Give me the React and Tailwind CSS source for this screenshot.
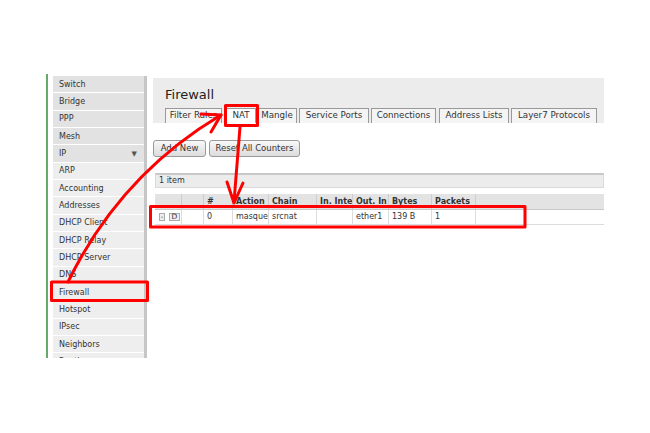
import React from 'react';

const menu = [
  { label: 'Switch', top: true },
  { label: 'Bridge', top: true },
  { label: 'PPP', top: true },
  { label: 'Mesh', top: true },
  { label: 'IP', top: true, open: true },
  { label: 'ARP' },
  { label: 'Accounting' },
  { label: 'Addresses' },
  { label: 'DHCP Client' },
  { label: 'DHCP Relay' },
  { label: 'DHCP Server' },
  { label: 'DNS' },
  { label: 'Firewall' },
  { label: 'Hotspot' },
  { label: 'IPsec' },
  { label: 'Neighbors' },
  { label: 'Routing' },
];

const tabs = [
  { label: 'Filter Rules', cls: 'w-[57px]' },
  { label: 'NAT', cls: 'ml-[4px] w-[30px]', active: true },
  { label: 'Mangle', cls: 'ml-[1px] w-[40px]' },
  { label: 'Service Ports', cls: 'ml-[2px] w-[70px]' },
  { label: 'Connections', cls: 'ml-[2px] w-[65px]' },
  { label: 'Address Lists', cls: 'ml-[3px] w-[70px]' },
  { label: 'Layer7 Protocols', cls: 'ml-[2px] w-[86px]' },
];

const columns = [
  { head: '', cls: 'w-[27px]' },
  { head: '', cls: 'w-[22px]' },
  { head: '#', cls: 'w-[29px]' },
  { head: 'Action', cls: 'w-[36px]' },
  { head: 'Chain', cls: 'w-[48px]' },
  { head: 'In. Inte', cls: 'w-[36px]' },
  { head: 'Out. In', cls: 'w-[36px]' },
  { head: 'Bytes', cls: 'w-[43px]' },
  { head: 'Packets', cls: 'w-[44px]' },
];

const row = ['', '', '0', 'masquerade', 'srcnat', '', 'ether1', '139 B', '1'];

function Sidebar() {
  return (
    <div className="flex h-[284px] border-l-2 border-[#67a967] pl-[5px] pt-[2px]">
      <div className="w-[91px] overflow-hidden">
        {menu.map((item) => (
          <div
            key={item.label}
            className={`flex h-[17.33px] items-center justify-between border-b border-white pl-[6px] pr-[7px] pt-[1px] text-[8px] text-[#333] ${
              item.top ? 'bg-[#e2e2e2]' : 'bg-[#eeeeee]'
            }`}
          >
            <span>{item.label}</span>
            {item.open && <span className="text-[7px] text-[#555]">▼</span>}
          </div>
        ))}
      </div>
      <div className="w-[3px] bg-[#c6c6c6]" />
    </div>
  );
}

function Firewall() {
  return (
    <main className="ml-[6px] w-[451px] pt-[4px]">
      <div className="h-[45px] bg-[#ececec] pl-[12px] pt-[9px]">
        <h1 className="text-[13px] leading-[16px] text-[#222]">Firewall</h1>
        <div className="mt-[5px] flex items-end">
          {tabs.map((tab) => (
            <div
              key={tab.label}
              className={`flex h-[15px] items-center justify-center whitespace-nowrap border border-b-0 border-[#999] text-[8.7px] text-[#333] ${tab.cls} ${
                tab.active ? 'bg-white' : 'bg-[#f4f4f4]'
              }`}
            >
              {tab.label}
            </div>
          ))}
        </div>
      </div>

      <div className="mt-[17px] flex gap-[3px]">
        <button className="h-[17px] w-[53px] rounded-[3px] border border-[#9a9a9a] bg-gradient-to-b from-[#f8f8f8] to-[#dcdcdc] text-[8.5px] text-[#333]">
          Add New
        </button>
        <button className="h-[17px] w-[91px] rounded-[3px] border border-[#9a9a9a] bg-gradient-to-b from-[#f8f8f8] to-[#dcdcdc] text-[8.5px] text-[#333]">
          Reset All Counters
        </button>
      </div>

      <div className="ml-[2px] mt-[16px] flex h-[15px] items-center border border-t-2 border-[#dadada] border-t-[#c8c8c8] bg-[#ececec] pl-[3px] text-[8px] text-[#333]">
        1 item
      </div>

      <div className="ml-[2px] mt-[6px]">
        <div className="flex h-[16px] border-b border-[#c8c8c8] bg-[#e3e3e3]">
          {columns.map((col, i) => (
            <div key={i} className={`flex items-center overflow-hidden whitespace-nowrap border-r border-[#cdcdcd] pl-[3px] text-[8px] font-bold text-[#333] ${col.cls}`}>
              {col.head}
            </div>
          ))}
          <div className="flex-1" />
        </div>
        <div className="flex h-[15px] border-b border-[#dcdcdc] bg-white">
          {columns.map((col, i) => (
            <div key={i} className={`flex items-center overflow-hidden whitespace-nowrap border-r border-[#dcdcdc] pl-[3px] text-[8px] text-[#333] ${col.cls}`}>
              {i === 0 ? (
                <div className="flex gap-[4px] pl-[1px]">
                  <span className="flex h-[8px] w-[6px] items-center justify-center border border-[#aaa] bg-[#eee] text-[7px] leading-none">-</span>
                  <span className="flex h-[8px] w-[11px] items-center justify-center border border-[#aaa] bg-[#eee] text-[7.5px] leading-none">D</span>
                </div>
              ) : (
                row[i]
              )}
            </div>
          ))}
          <div className="flex-1" />
        </div>
      </div>
    </main>
  );
}

function Annotations() {
  return (
    <svg className="pointer-events-none absolute left-0 top-0" width="650" height="433" viewBox="0 0 650 433">
      <g fill="none" stroke="#ff0000" strokeWidth="3" strokeLinecap="round" strokeLinejoin="round">
        <rect x="225.5" y="105.5" width="32" height="20" strokeLinecap="butt" />
        <rect x="51.5" y="282" width="96" height="18.5" strokeLinecap="butt" />
        <rect x="150.5" y="206.5" width="374.5" height="20.5" strokeLinecap="butt" />
        <path d="M68 282 Q120 175 221 115" />
        <path d="M201 114 L221 115 L211 132" />
        <path d="M240 127 L234 202" />
        <path d="M227 182 L234 203 L243 183" />
      </g>
    </svg>
  );
}

export default function App() {
  return (
    <div className="relative h-[433px] w-[650px] overflow-hidden bg-white font-['DejaVu_Sans',sans-serif]">
      <div className="flex pl-[46px] pt-[74px]">
        <Sidebar />
        <Firewall />
      </div>
      <Annotations />
    </div>
  );
}
